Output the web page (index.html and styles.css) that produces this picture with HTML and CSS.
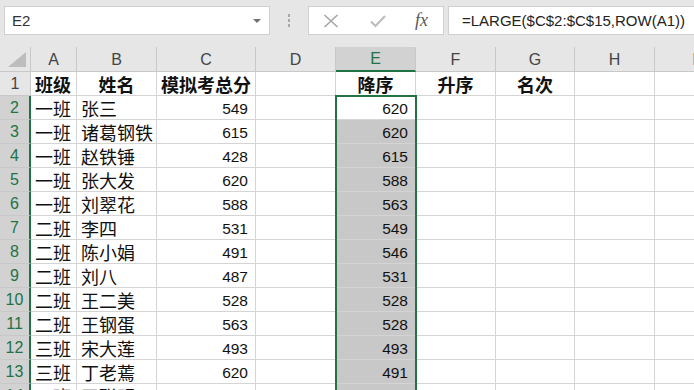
FILE: index.html
```html
<!DOCTYPE html>
<html lang="zh-CN">
<head>
    <meta charset="UTF-8">
    <title>成绩排序</title>
    <link rel="stylesheet" href="styles.css">
</head>
<body>
    <!-- Formula bar -->
    <div class="formula-bar">
        <div class="name-box">
            <span class="name">E2</span>
            <span class="caret"></span>
        </div>
        <div class="grip"><i></i><i></i><i></i></div>
        <div class="fx-buttons">
            <svg class="btn-icon" width="16" height="14" viewBox="0 0 16 14">
                <path d="M1.5 1 L14.5 13 M14.5 1 L1.5 13" stroke="#a6a6a6" stroke-width="1.6" fill="none"/>
            </svg>
            <svg class="btn-icon" width="16" height="14" viewBox="0 0 16 14">
                <path d="M1 7.5 L5.5 12 L15 2" stroke="#bdbdbd" stroke-width="2.2" fill="none"/>
            </svg>
            <span class="fx">fx</span>
        </div>
        <div class="formula">=LARGE($C$2:$C$15,ROW(A1))</div>
    </div>

    <!-- Sheet -->
    <div class="sheet">
        <div class="grid">
            <div class="hd corner">
                <svg width="18" height="15" viewBox="0 0 18 15"><polygon points="18,0 18,15 0,15" fill="#bdbdbd"/></svg>
            </div>
            <div class="hd col">A</div>
            <div class="hd col">B</div>
            <div class="hd col">C</div>
            <div class="hd col">D</div>
            <div class="hd col active">E</div>
            <div class="hd col">F</div>
            <div class="hd col">G</div>
            <div class="hd col">H</div>
            <div class="hd col">I</div>

            <div class="hd row">1</div>
            <div class="cell txt bold">班级</div>
            <div class="cell txt bold center">姓名</div>
            <div class="cell txt bold center">模拟考总分</div>
            <div class="cell"></div>
            <div class="cell txt bold center">降序</div>
            <div class="cell txt bold center">升序</div>
            <div class="cell txt bold center">名次</div>
            <div class="cell"></div>
            <div class="cell"></div>
        </div>
        <div class="grid" id="rows"></div>
        <div class="selection"></div>
    </div>

    <script>
        const data = [
            ['一班', '张三', 549, 620],
            ['一班', '诸葛钢铁', 615, 620],
            ['一班', '赵铁锤', 428, 615],
            ['一班', '张大发', 620, 588],
            ['一班', '刘翠花', 588, 563],
            ['二班', '李四', 531, 549],
            ['二班', '陈小娟', 491, 546],
            ['二班', '刘八', 487, 531],
            ['二班', '王二美', 528, 528],
            ['二班', '王钢蛋', 563, 528],
            ['三班', '宋大莲', 493, 493],
            ['三班', '丁老蔫', 620, 491],
            ['三班', '王联明', 549, 487]
        ];

        const rows = document.getElementById('rows');
        data.forEach(function(r, i) {
            const cells = [
                ['hd row sel', i + 2],
                ['cell txt', r[0]],
                ['cell txt', r[1]],
                ['cell num', r[2]],
                ['cell', ''],
                ['cell num ' + (i === 0 ? 'current' : 'shaded'), r[3]],
                ['cell', ''],
                ['cell', ''],
                ['cell', ''],
                ['cell', '']
            ];
            cells.forEach(function(c) {
                const div = document.createElement('div');
                div.className = c[0];
                div.textContent = c[1];
                rows.appendChild(div);
            });
        });
    </script>
</body>
</html>
```

FILE: styles.css
```css
* {
    margin: 0;
    padding: 0;
    box-sizing: border-box;
}

body {
    width: 694px;
    height: 390px;
    overflow: hidden;
    background: #ffffff;
    font-family: 'Liberation Sans', 'Noto Sans CJK SC', sans-serif;
    color: #222;
}

/* Formula bar */
.formula-bar {
    height: 47px;
    background: #e6e6e6;
    display: flex;
    align-items: flex-start;
    padding-top: 6px;
    padding-left: 4px;
    width: 760px;
}

.name-box {
    width: 266px;
    height: 29px;
    background: #fff;
    border: 1px solid #d0d0d0;
    display: flex;
    align-items: center;
    justify-content: space-between;
    padding: 0 8px 0 7px;
}

.name {
    font-size: 15px;
    color: #333;
}

.caret {
    width: 0;
    height: 0;
    border-left: 4px solid transparent;
    border-right: 4px solid transparent;
    border-top: 4px solid #707070;
}

.grip {
    width: 38px;
    height: 29px;
    display: flex;
    flex-direction: column;
    align-items: center;
    justify-content: center;
    gap: 2px;
}

.grip i {
    width: 2px;
    height: 3px;
    background: #a8a8a8;
}

.fx-buttons {
    width: 136px;
    height: 29px;
    background: #fff;
    border: 1px solid #d0d0d0;
    display: flex;
    align-items: center;
    padding-left: 14px;
    gap: 31px;
}

.fx {
    font-family: 'Liberation Serif', serif;
    font-style: italic;
    font-size: 18px;
    color: #595959;
    margin-left: -2px;
}

.formula {
    margin-left: 4px;
    flex: 1;
    height: 29px;
    background: #fff;
    border: 1px solid #d0d0d0;
    padding-left: 13px;
    font-size: 15px;
    line-height: 27px;
    color: #222;
    white-space: nowrap;
}

/* Sheet grid */
.sheet {
    position: relative;
}

.grid {
    display: grid;
    grid-template-columns: 31px 46px 80px 99px 80px 80px 80px 79px 80px 80px;
    grid-auto-rows: 24px;
    width: 735px;
}

.grid:first-child {
    grid-template-rows: 25px 24px;
}

.hd {
    background: #e6e6e6;
    color: #444;
    font-size: 16px;
    display: flex;
    align-items: center;
    justify-content: center;
    border-right: 1px solid #c8c8c8;
    border-bottom: 1px solid #c8c8c8;
}

.hd.corner {
    align-items: flex-end;
    justify-content: flex-end;
    padding: 0 4px 4px 0;
}

.hd.col {
    padding-top: 1px;
}

.hd.active {
    background: #d2d2d2;
    color: #217346;
    border-bottom: 2px solid #217346;
}

.hd.row.sel {
    background: #d2d2d2;
    color: #217346;
    border-right: 2px solid #217346;
}

.cell {
    border-right: 1px solid #d4d4d4;
    border-bottom: 1px solid #d4d4d4;
    display: flex;
    align-items: center;
    padding: 0 4px;
    white-space: nowrap;
    overflow: hidden;
}

.txt {
    font-family: 'Noto Sans CJK SC', sans-serif;
    font-size: 18px;
    color: #111;
}

.bold {
    font-weight: bold;
}

.center {
    justify-content: center;
}

.num {
    justify-content: flex-end;
    font-size: 15.5px;
    padding-right: 7px;
    padding-top: 2px;
    color: #111;
}

.shaded {
    background: #c8c8c8;
}

/* Selected range E2:E15 */
.selection {
    position: absolute;
    left: 335px;
    top: 48px;
    width: 82px;
    height: 320px;
    border: 2px solid #217346;
    pointer-events: none;
}
```
